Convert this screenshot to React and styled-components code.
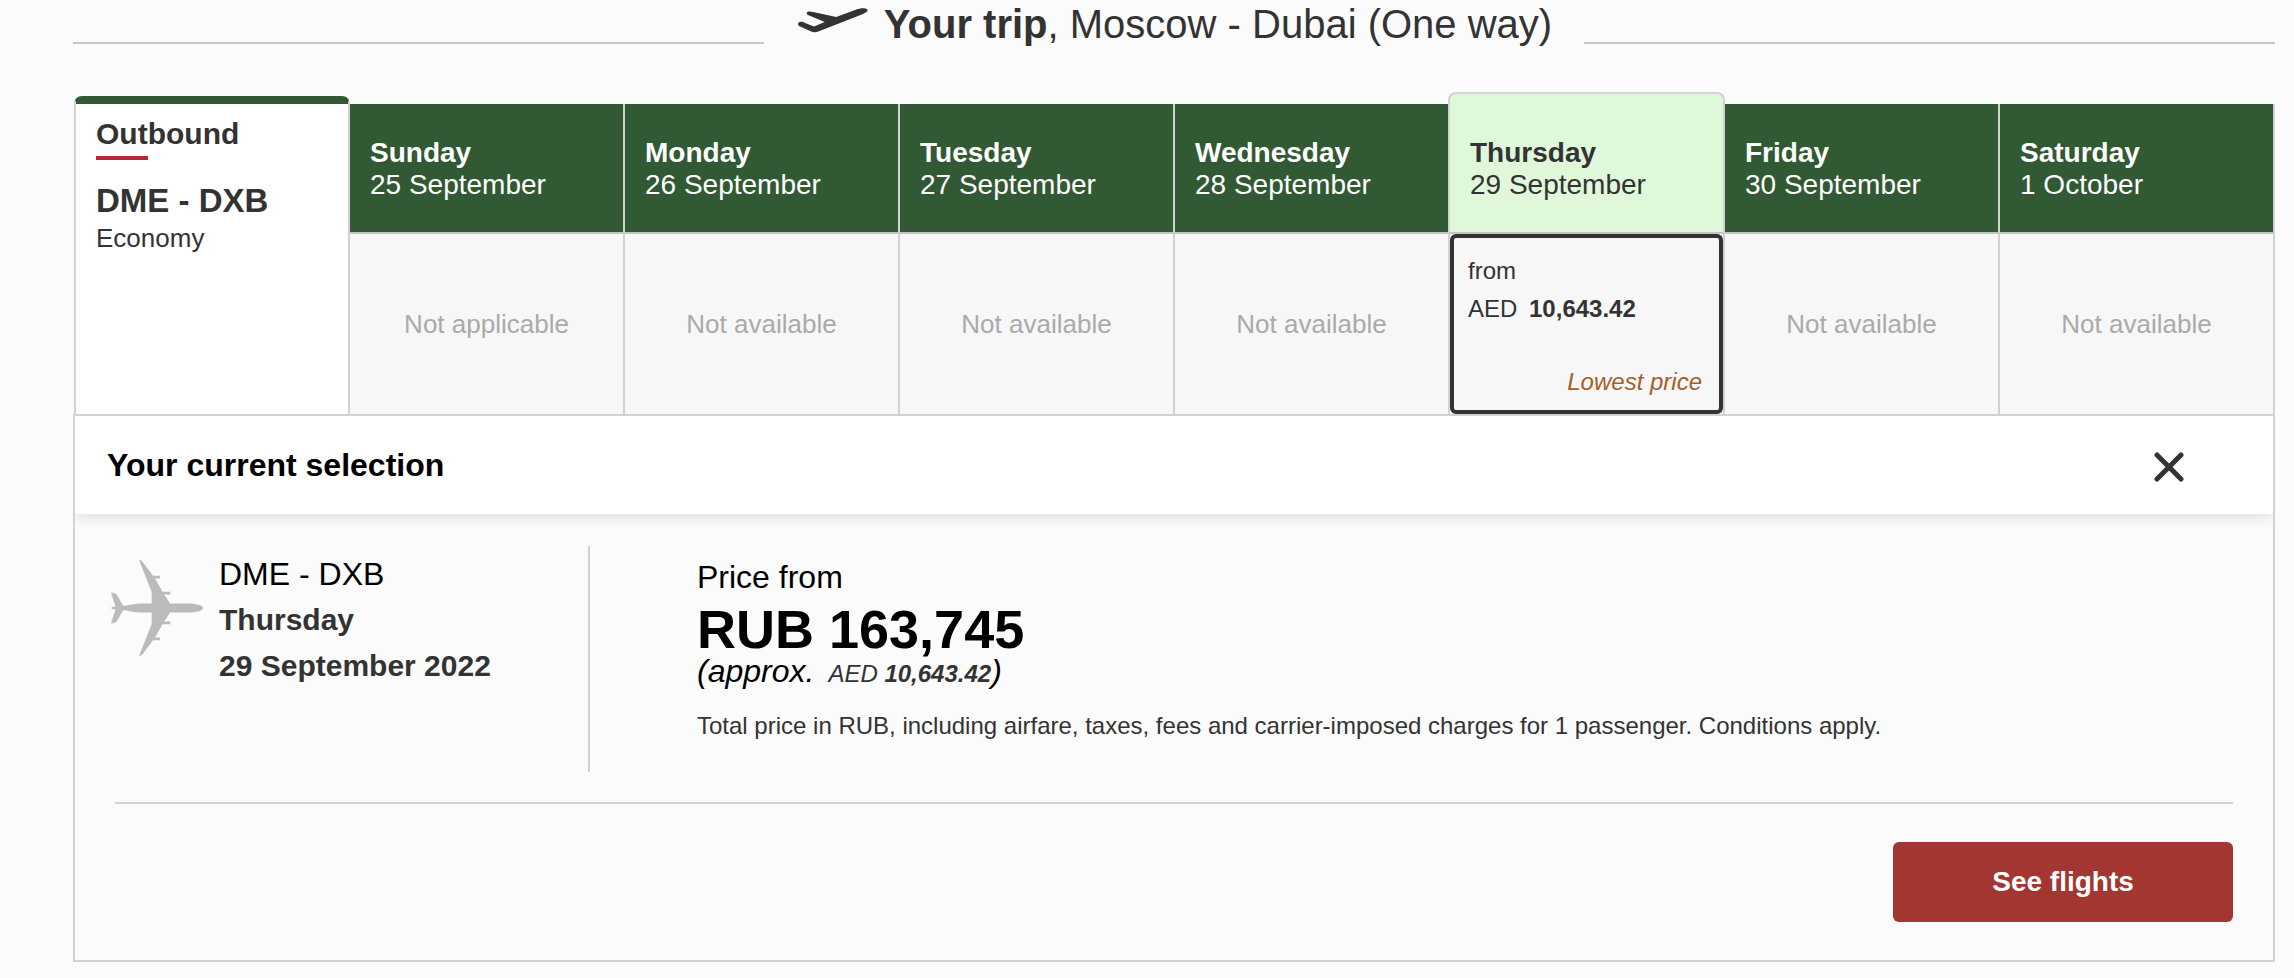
import styled, { createGlobalStyle, css } from "styled-components";

const days = [
  { day: "Sunday", date: "25 September", status: "Not applicable" },
  { day: "Monday", date: "26 September", status: "Not available" },
  { day: "Tuesday", date: "27 September", status: "Not available" },
  { day: "Wednesday", date: "28 September", status: "Not available" },
  { day: "Thursday", date: "29 September", price: "10,643.42" },
  { day: "Friday", date: "30 September", status: "Not available" },
  { day: "Saturday", date: "1 October", status: "Not available" },
];

function TakeoffIcon() {
  return (
    <svg width="70" height="25" viewBox="0 0 70 25" fill="#333333" aria-hidden="true">
      <path d="M1 18 C-1 15.500 0.500 14 3 13.800 C4.500 13.700 5.500 14.300 6.500 14.700 L16 18.600 L26.700 14 L10 7 C8 6 8.300 4 10.500 3.500 C12 3.200 13.500 3.800 15 4.100 L38.300 9 L57.700 1.700 C61 0.500 64 0 66 0.300 C69 0.500 70.500 2 69 3.600 C68 4.700 66.500 5.300 65 5.900 L21 23.300 C19 24 17.500 24.400 16 24.300 C14 24.200 12.500 23.300 11 22.600 Z" />
    </svg>
  );
}

function PlaneIcon() {
  return (
    <svg width="92" height="96" viewBox="0 0 92 96" fill="#bbbbbb" aria-hidden="true">
      <path d="M28 0 C30 0 31 1 32 2.500 L42 15.700 H49 V18.500 H44 L51.500 31.700 H59.300 V34.500 H53.300 L59 43.500 H78 C84 43.500 92 45 92 48 C92 51 84 52.500 78 52.500 H59 L53.300 61.500 H59.300 V64.300 H51.500 L44 77.500 H49 V80.300 H42 L32 93.500 C31 95 30 96 28 96 L40.700 64 V52.500 H30 C24 52.500 18 51 12.300 50 L6 61 C4.500 63 2.500 63.500 0 63.300 L4.500 49.500 L0.500 48.800 V47.200 L4.500 46.500 L0 32.700 C2.500 32.500 4.500 33 6 35 L12.300 46 C18 45 24 43.500 30 43.500 H40.700 V32 Z" />
    </svg>
  );
}

export default function App() {
  return (
    <Page>
      <GlobalStyle />
      <TripHeader>
        <Rule />
        <TripTitle>
          <TakeoffIcon />
          <span>
            <b>Your trip</b>, Moscow - Dubai (One way)
          </span>
        </TripTitle>
        <Rule />
      </TripHeader>

      <Calendar>
        <tbody>
          <tr>
            <OutboundCell rowSpan={2} scope="rowgroup">
              <Outbound>
                <OutboundLabel>Outbound</OutboundLabel>
                <Route>DME - DXB</Route>
                <Cabin>Economy</Cabin>
              </Outbound>
            </OutboundCell>
            {days.map(({ day, date, price }) => (
              <DayCell key={date} scope="col">
                <Day $selected={!!price}>
                  <b>{day}</b>
                  <span>{date}</span>
                </Day>
              </DayCell>
            ))}
          </tr>
          <tr>
            {days.map(({ date, status, price }) => (
              <FareCell key={date}>
                {price ? (
                  <Fare type="button">
                    <span>from</span>
                    <FareAmount>
                      AED <b>{price}</b>
                    </FareAmount>
                    <Lowest>Lowest price</Lowest>
                  </Fare>
                ) : (
                  status
                )}
              </FareCell>
            ))}
          </tr>
        </tbody>
      </Calendar>

      <Selection>
        <SelectionHeader>
          <SelectionTitle>Your current selection</SelectionTitle>
          <CloseButton type="button" aria-label="Close">
            <svg width="30" height="30" viewBox="0 0 30 30" aria-hidden="true">
              <path
                d="M3 3 L27 27 M27 3 L3 27"
                stroke="#333333"
                strokeWidth="5"
                strokeLinecap="round"
              />
            </svg>
          </CloseButton>
        </SelectionHeader>
        <SelectionBody>
          <Leg>
            <PlaneIcon />
            <LegText>
              <LegRoute>DME - DXB</LegRoute>
              <LegDate>Thursday</LegDate>
              <LegDate>29 September 2022</LegDate>
            </LegText>
          </Leg>
          <Price>
            <PriceLabel>Price from</PriceLabel>
            <Total>RUB 163,745</Total>
            <Approx>
              <span>(approx.</span>
              <ApproxAmount>
                AED <b>10,643.42</b>
              </ApproxAmount>
              <span>)</span>
            </Approx>
            <Terms>
              Total price in RUB, including airfare, taxes, fees and carrier-imposed charges for 1
              passenger. Conditions apply.
            </Terms>
          </Price>
        </SelectionBody>
        <SelectionFooter>
          <SubmitButton type="button">See flights</SubmitButton>
        </SelectionFooter>
      </Selection>
    </Page>
  );
}

const GlobalStyle = createGlobalStyle`
  * {
    box-sizing: border-box;
  }
  body {
    margin: 0;
    background: #fbfbfb;
    color: #333333;
    font-family: "Liberation Sans", Arial, Helvetica, sans-serif;
  }
  p, h1, h2 {
    margin: 0;
  }
  button {
    font-family: inherit;
    cursor: pointer;
  }
`;

const Page = styled.main`
  padding: 0 19px 16px 73px;
`;
const TripHeader = styled.header`
  display: flex;
  align-items: flex-start;
  margin-bottom: 44px;
`;
const Rule = styled.div`
  flex: 1;
  height: 2px;
  margin-top: 42px;
  background: #c6c6c6;
`;
const TripTitle = styled.h1`
  display: flex;
  align-items: flex-start;
  gap: 16px;
  padding: 0 32px 0 34px;
  font-size: 40px;
  line-height: 48px;
  font-weight: 400;
  white-space: nowrap;

  svg {
    margin-top: 8px;
  }
`;

const Calendar = styled.table`
  width: calc(100% - 2px);
  margin-left: 2px;
  table-layout: fixed;
  border-spacing: 0;
`;
const OutboundCell = styled.th`
  padding: 4px 0 0;
  vertical-align: top;
  text-align: left;
`;
const Outbound = styled.div`
  display: flex;
  flex-direction: column;
  align-items: flex-start;
  height: 318px;
  margin-left: -1px;
  padding: 12px 20px;
  border: 2px solid #d2d2d2;
  border-top: 8px solid #315933;
  border-bottom: 0;
  border-radius: 8px 8px 0 0;
  background: #ffffff;
`;
const OutboundLabel = styled.span`
  font-size: 30px;
  line-height: 36px;

  &::after {
    content: "";
    display: block;
    width: 52px;
    height: 4px;
    margin-top: 4px;
    background: #b32a35;
  }
`;
const Route = styled.span`
  margin-top: 20px;
  font-size: 33px;
  line-height: 42px;
`;
const Cabin = styled.span`
  font-size: 26px;
  line-height: 32px;
  font-weight: 400;
`;
const DayCell = styled.th`
  padding: 0;
  vertical-align: bottom;
  text-align: left;
`;
const Day = styled.div`
  display: flex;
  flex-direction: column;
  justify-content: flex-end;
  height: 130px;
  padding: 0 20px 31px;
  border-right: 2px solid #d2d2d2;
  border-bottom: 2px solid #c4c4c4;
  background: #315933;
  color: #ffffff;
  font-size: 28px;
  line-height: 32px;
  font-weight: 400;

  ${({ $selected }) =>
    $selected &&
    css`
      height: 142px;
      margin-left: -2px;
      border: 2px solid #d2d2d2;
      border-bottom-color: #c4c4c4;
      border-radius: 8px 8px 0 0;
      background: #dff8d9;
      color: #333333;
    `}
`;
const FareCell = styled.td`
  height: 180px;
  padding: 0;
  border-right: 2px solid #d2d2d2;
  background: #f7f7f7;
  color: #aaaaaa;
  font-size: 26px;
  text-align: center;
`;
const Fare = styled.button`
  display: flex;
  flex-direction: column;
  width: 100%;
  height: 180px;
  padding: 14px 17px 13px 14px;
  border: 4px solid #333333;
  border-radius: 6px;
  background: #f7f7f7;
  color: #333333;
  font-size: 24px;
  line-height: 38px;
  text-align: left;
`;
const FareAmount = styled.span`
  b {
    margin-left: 5px;
  }
`;
const Lowest = styled.em`
  align-self: flex-end;
  margin-top: auto;
  line-height: 30px;
  color: #a5602a;
`;

const Selection = styled.section`
  border: 2px solid #d2d2d2;
`;
const SelectionHeader = styled.div`
  display: flex;
  align-items: center;
  justify-content: space-between;
  height: 98px;
  padding: 0 89px 0 32px;
  background: #ffffff;
  box-shadow: 0 4px 12px rgba(0, 0, 0, 0.1);
  clip-path: inset(0 0 -20px 0);
`;
const SelectionTitle = styled.h2`
  color: #000000;
  font-size: 32px;
`;
const CloseButton = styled.button`
  display: flex;
  padding: 4px 0 0;
  border: 0;
  background: none;
`;
const SelectionBody = styled.div`
  display: flex;
  padding: 32px 0 30px;
`;
const Leg = styled.div`
  display: flex;
  flex: none;
  gap: 16px;
  width: 515px;
  height: 226px;
  padding-left: 36px;
  border-right: 2px solid #d2d2d2;

  svg {
    margin-top: 14px;
  }
`;
const LegText = styled.div`
  padding-top: 5px;
  line-height: 46px;
`;
const LegRoute = styled.p`
  color: #000000;
  font-size: 32px;
`;
const LegDate = styled.p`
  font-size: 30px;
  font-weight: 700;
`;
const Price = styled.div`
  padding: 8px 40px 0 107px;
  color: #000000;
`;
const PriceLabel = styled.p`
  font-size: 32px;
  line-height: 46px;
`;
const Total = styled.p`
  font-size: 54px;
  line-height: 58px;
  font-weight: 700;
`;
const Approx = styled.p`
  display: flex;
  align-items: baseline;
  font-size: 32px;
  line-height: 26px;
  font-style: italic;
`;
const ApproxAmount = styled.span`
  margin-left: 14px;
  color: #333333;
  font-size: 24px;
`;
const Terms = styled.p`
  margin-top: 23px;
  color: #333333;
  font-size: 24px;
  line-height: 32px;
`;
const SelectionFooter = styled.div`
  display: flex;
  justify-content: flex-end;
  margin: 0 40px;
  padding: 38px 0;
  border-top: 2px solid #d2d2d2;
`;
const SubmitButton = styled.button`
  width: 340px;
  height: 80px;
  border: 0;
  border-radius: 6px;
  background: #a33631;
  color: #ffffff;
  font-size: 28px;
  font-weight: 700;
`;
